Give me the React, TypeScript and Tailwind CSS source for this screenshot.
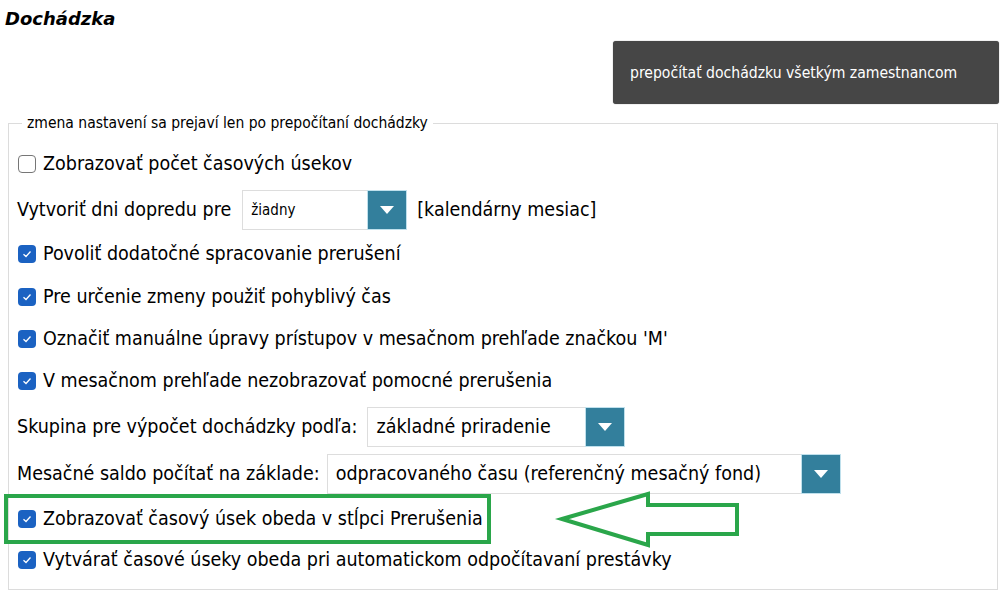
import React from "react";

const FONT = { fontFamily: '"DejaVu Sans Condensed", "DejaVu Sans", sans-serif' };

function Check({ checked }: { checked: boolean }) {
  if (!checked) {
    return (
      <span className="inline-block w-[18px] h-[18px] rounded-[4px] border border-[#767676] bg-white shrink-0" />
    );
  }
  return (
    <span className="inline-flex items-center justify-center w-[18px] h-[18px] rounded-[4px] bg-[#1b62c2] shrink-0">
      <svg width="12" height="12" viewBox="0 0 12 12">
        <path d="M2.5 6.2 L5 8.5 L9.5 3.5" fill="none" stroke="white" strokeWidth="1.3" />
      </svg>
    </span>
  );
}

function Select({ text, w, small }: { text: string; w: number; small?: boolean }) {
  return (
    <span className="inline-flex h-[40px] items-stretch">
      <span
        className={`flex items-center border border-[#dddddd] border-r-0 bg-white pl-[8px] ${small ? "text-[15px]" : ""}`}
        style={{ width: w }}
      >
        {text}
      </span>
      <span className="flex items-center justify-center w-[40px] bg-[#337f9c] border border-[#bfe0ec]">
        <svg width="16" height="10" viewBox="0 0 16 10">
          <path d="M1 1 L15 1 L8 9 Z" fill="white" />
        </svg>
      </span>
    </span>
  );
}

function CheckRow({ label, checked, h }: { label: string; checked: boolean; h: number }) {
  return (
    <div className="flex items-center gap-[7px]" style={{ height: h }}>
      <Check checked={checked} />
      <span>{label}</span>
    </div>
  );
}

export default function App() {
  return (
    <div className="relative w-[1008px] h-[601px] bg-white text-black overflow-hidden" style={FONT}>
      <div
        className="pl-[5px] pt-[7px] text-[18px] font-bold italic leading-[24px]"
        style={{ fontFamily: '"DejaVu Sans", sans-serif' }}
      >
        Dochádzka
      </div>
      <div className="flex justify-end pr-[9px] mt-[10px]">
        <div className="w-[386px] h-[63px] rounded-[3px] bg-[#464646] text-white text-[15.6px] flex items-center pl-[17px] pt-[2px] shadow-[0_0_1px_rgba(0,0,0,0.6)]">
          prepočítať dochádzku všetkým zamestnancom
        </div>
      </div>
      <fieldset className="mx-[8px] mt-[10px] w-[990px] h-[476px] border border-[#dcdcdc] pl-[8px] text-[19.5px]">
        <legend className="ml-[5px] px-[5px] text-[15.5px] leading-[18px]">
          zmena nastavení sa prejaví len po prepočítaní dochádzky
        </legend>
        <div className="pt-[10px]">
          <div className="pl-[1px]">
            <CheckRow label="Zobrazovať počet časových úsekov" checked={false} h={44} />
          </div>
          <div className="flex items-center" style={{ height: 48 }}>
            <span className="mr-[11px]">Vytvoriť dni dopredu pre</span>
            <Select text="žiadny" w={125} small />
            <span className="ml-[10px]">[kalendárny mesiac]</span>
          </div>
          <div className="pl-[1px]">
            <CheckRow label="Povoliť dodatočné spracovanie prerušení" checked h={40} />
            <CheckRow label="Pre určenie zmeny použiť pohyblivý čas" checked h={46} />
            <CheckRow label="Označiť manuálne úpravy prístupov v mesačnom prehľade značkou 'M'" checked h={38} />
            <CheckRow label="V mesačnom prehľade nezobrazovať pomocné prerušenia" checked h={46} />
          </div>
          <div className="flex items-center" style={{ height: 45 }}>
            <span className="mr-[10px]">Skupina pre výpočet dochádzky podľa:</span>
            <Select text="základné priradenie" w={218} />
          </div>
          <div className="flex items-center" style={{ height: 49 }}>
            <span className="mr-[7px]">Mesačné saldo počítať na základe:</span>
            <Select text="odpracovaného času (referenčný mesačný fond)" w={474} />
          </div>
          <div className="pl-[1px]">
            <CheckRow label="Zobrazovať časový úsek obeda v stĺpci Prerušenia" checked h={42} />
            <CheckRow label="Vytvárať časové úseky obeda pri automatickom odpočítavaní prestávky" checked h={40} />
          </div>
        </div>
      </fieldset>

      <div className="absolute left-[4px] top-[494px] w-[487px] h-[50px] border-[4px] border-[#2aa64a]" />
      <svg className="absolute left-0 top-0 pointer-events-none" width="1008" height="601">
        <path
          d="M562 519 L648 494 L648 505 L737 505 L737 534 L648 534 L648 545 Z"
          fill="none"
          stroke="#2aa64a"
          strokeWidth="4"
          strokeLinejoin="miter"
        />
      </svg>
    </div>
  );
}
